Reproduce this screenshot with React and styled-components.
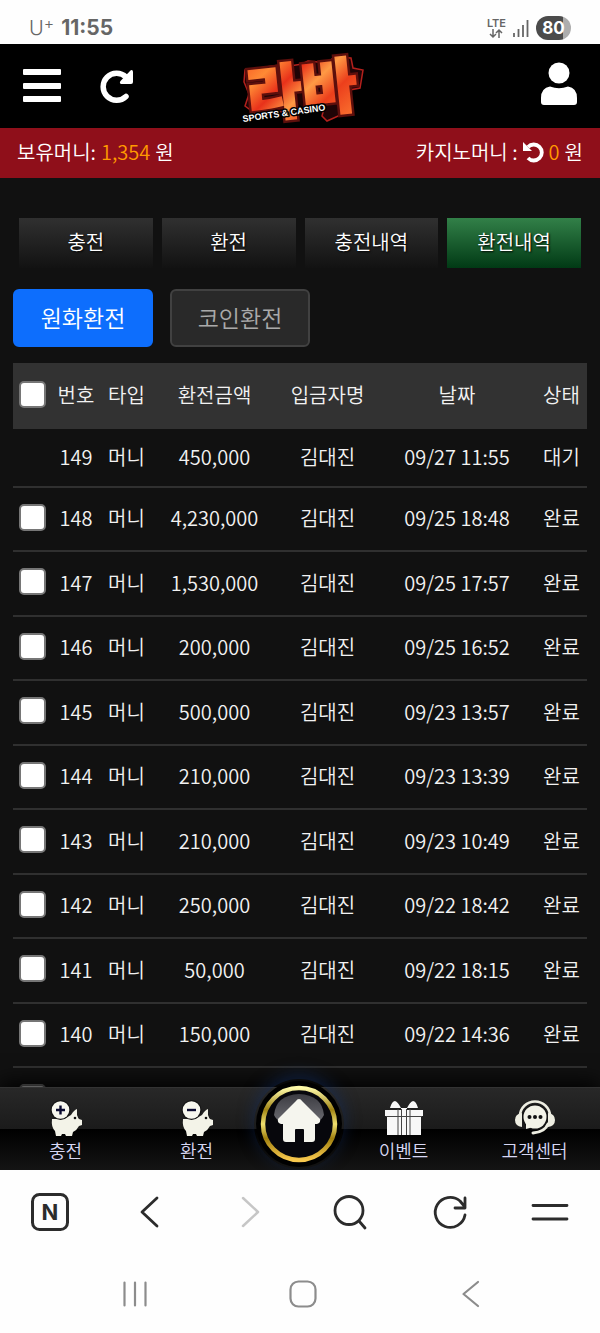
import { useState } from 'react';
import styled, { createGlobalStyle } from 'styled-components';

const rows = [
  { no: 149, amount: '450,000', date: '09/27 11:55', state: '대기' },
  { no: 148, amount: '4,230,000', date: '09/25 18:48', state: '완료' },
  { no: 147, amount: '1,530,000', date: '09/25 17:57', state: '완료' },
  { no: 146, amount: '200,000', date: '09/25 16:52', state: '완료' },
  { no: 145, amount: '500,000', date: '09/23 13:57', state: '완료' },
  { no: 144, amount: '210,000', date: '09/23 13:39', state: '완료' },
  { no: 143, amount: '210,000', date: '09/23 10:49', state: '완료' },
  { no: 142, amount: '250,000', date: '09/22 18:42', state: '완료' },
  { no: 141, amount: '50,000', date: '09/22 18:15', state: '완료' },
  { no: 140, amount: '150,000', date: '09/22 14:36', state: '완료' },
];

const GlobalStyle = createGlobalStyle`
  * { box-sizing: border-box; }
  body {
    margin: 0;
    background: #fefefe;
    font-family: 'Noto Sans CJK KR', sans-serif;
    font-size: 20px;
    font-weight: 350;
  }
  button {
    padding: 0;
    border: 0;
    background: none;
    font: inherit;
    color: inherit;
    cursor: pointer;
  }
  a { color: inherit; text-decoration: none; }
  svg { display: block; overflow: visible; }
`;

const Phone = styled.div`
  display: flex;
  flex-direction: column;
  height: 100vh;
`;

/* 상태바 */
const StatusBar = styled.div`
  display: flex;
  align-items: center;
  justify-content: space-between;
  flex: none;
  height: 44px;
  padding: 12px 29px 0;
  background: #fefefe;
  color: #666;
  font-family: Inter, sans-serif;
`;
const StatusGroup = styled.div`
  display: flex;
  align-items: center;
  gap: 7px;
`;
const Carrier = styled.span`
  font-size: 20px;
  line-height: 24px;
  font-weight: 300;
  sup {
    font-size: 16px;
    line-height: 0;
    vertical-align: 6px;
  }
`;
const Clock = styled.span`
  font-size: 21px;
  line-height: 24px;
  font-weight: 700;
`;
const Lte = styled.div`
  display: flex;
  flex-direction: column;
  align-items: center;
  font-size: 11px;
  line-height: 11px;
  font-weight: 600;
`;
const Battery = styled.div`
  width: 35px;
  height: 24px;
  border-radius: 12px;
  background: linear-gradient(90deg, #4b4b4b 78%, #adadad 78%);
  color: #fff;
  font-size: 17px;
  line-height: 24px;
  font-weight: 700;
  text-align: center;
`;

/* 헤더 */
const Header = styled.header`
  display: grid;
  grid-template-columns: 1fr auto 1fr;
  align-items: center;
  flex: none;
  height: 84px;
  padding: 0 22px;
  background: #000;
  color: #fff;
`;
const HeaderLeft = styled.div`
  display: flex;
  align-items: center;
  gap: 38px;
`;
const UserButton = styled.button`
  justify-self: end;
`;

const MoneyBar = styled.div`
  display: flex;
  align-items: center;
  justify-content: space-between;
  flex: none;
  height: 50px;
  padding: 0 17px 3px;
  background: #8f0f1a;
  color: #fff;
`;
const Money = styled.div`
  display: flex;
  align-items: center;
  gap: 5px;
`;
const Amount = styled.span`
  color: #ff9a00;
`;

/* 본문 */
const Main = styled.main`
  flex: 1;
  min-height: 0;
  overflow: hidden;
  padding-top: 40px;
  background: #111;
  color: #f2f2f2;
`;
const Tabs = styled.nav`
  display: grid;
  grid-template-columns: repeat(4, 1fr);
  gap: 9px;
  padding: 0 19px;
`;
const Tab = styled.button`
  height: 50px;
  padding-bottom: 3px;
  background: ${(props) =>
    props.$active
      ? 'linear-gradient(#328048, #013a15)'
      : 'linear-gradient(#303030, #121212)'};
  color: #fff;
  text-shadow: 1px 1px 2px #000;
`;
const SubTabs = styled.div`
  display: flex;
  gap: 17px;
  padding: 21px 13px 16px;
`;
const SubTab = styled.button`
  width: 140px;
  height: 58px;
  padding-bottom: 3px;
  border: 2px solid ${(props) => (props.$active ? '#0d6efd' : '#414141')};
  border-radius: 6px;
  background: ${(props) => (props.$active ? '#0d6efd' : '#292929')};
  color: ${(props) => (props.$active ? '#fff' : '#aaa')};
  font-size: 23px;
`;
const TableWrap = styled.div`
  padding: 0 13px;
`;
const Table = styled.table`
  width: 100%;
  table-layout: fixed;
  border-collapse: collapse;
  text-align: center;
  white-space: nowrap;

  th, td {
    padding: 0 0 3px;
    font-weight: 350;
  }
  th {
    height: 66px;
    background: #323232;
  }
  td {
    height: 64px;
    border-bottom: 2px solid #303030;
  }
  tr:nth-child(odd) td { height: 65px; }
  tbody tr:first-child td { height: 58px; }
`;
const Col = styled.col`
  width: ${(props) => props.$width}px;
`;
const Check = styled.input`
  appearance: none;
  display: block;
  width: 27px;
  height: 27px;
  margin: 0 auto 1px;
  border: 2px solid #767676;
  border-radius: 5px;
  background: #fff;
  &:checked {
    background: #0d6efd;
  }
`;

/* 하단 메뉴 */
const BottomNav = styled.nav`
  position: relative;
  display: flex;
  flex: none;
  height: 83px;
  border-top: 1px solid #333;
  background: linear-gradient(#282828, #1b1b1b 50%, #000 50%, #141414);
  box-shadow: 0 -4px 20px #000;
  color: #d8d8f4;
`;
const NavItem = styled.a`
  display: flex;
  flex-direction: column;
  align-items: center;
  flex: 1;
  padding-top: 12px;
  font-size: 18px;
  line-height: 26px;
`;
const HomeSlot = styled.div`
  position: relative;
  width: 76px;
`;
const HomeLink = styled.a`
  position: absolute;
  left: 50%;
  bottom: 1px;
  margin-left: -46px;
  border-radius: 50%;
  box-shadow: 0 -4px 16px #12306c80;
`;

const BrowserBar = styled.nav`
  position: relative;
  display: flex;
  flex: none;
  height: 83px;
  background: #fefefe;
  color: #2c2c2c;
`;
const SystemBar = styled.nav`
  display: flex;
  flex: none;
  height: 80px;
  padding: 2px 45px 0 51px;
  background: #fefefe;
  color: #8c8c8c;
`;
const BarButton = styled.button`
  display: flex;
  align-items: center;
  justify-content: center;
  flex: 1;
  &:disabled { color: #c6c6c6; }
`;

const Logo = () => (
  <svg width="128" height="80" viewBox="0 0 128 80" fontFamily="'Noto Sans CJK KR', sans-serif">
    <defs>
      <linearGradient id="lava" x1="0" y1="0" x2="1" y2="1">
        <stop offset="0" stopColor="#f4431c" />
        <stop offset=".25" stopColor="#ff8a35" />
        <stop offset=".4" stopColor="#e8311a" />
        <stop offset=".55" stopColor="#ff9a45" />
        <stop offset=".7" stopColor="#ec3f1c" />
        <stop offset="1" stopColor="#ff8436" />
      </linearGradient>
    </defs>
    <path d="M9 24 50 18 54 20 66 18 72 15 92 17 98 11 115 12 117 22 127 24 124 42 114 44 109 67 91 75 86 70 88 62 20 68 9 60 13 48 8 36Z" fill="#1f0406" stroke="#b3201c" strokeWidth="1.500" />
    <g fontSize="60" fontWeight="900" transform="rotate(-6 64 40)">
      <text x="10" y="66" fill="#5e0f0c" stroke="#5e0f0c" strokeWidth="7">라바</text>
      <text x="10" y="66" fill="url(#lava)" stroke="url(#lava)" strokeWidth="2">라바</text>
    </g>
    <text x="7" y="76" transform="rotate(-8 7 76)" fontFamily="'Liberation Sans', sans-serif" fontSize="9" fontWeight="700" fill="#fff" stroke="#000" strokeWidth="3" paintOrder="stroke">SPORTS &amp; CASINO</text>
  </svg>
);

const Pig = ({ minus }) => (
  <svg width="32" height="37" viewBox="0 0 32 37">
    <path d="M2 19H14L21 15Q24 10 27 9L27 15Q28 18 29 19L32 20V25L29 26Q27 30 23 32L22 36H16L15 34H12L11 36H6L5 31Q1 27 2 19Z" fill="#f3f3e8" />
    <circle cx="25" cy="18" r="1.300" fill="#111" />
    <circle cx="10.500" cy="10" r="10" fill="#151515" />
    <circle cx="10.500" cy="10" r="8.800" fill="#f7f7ee" />
    <path d={minus ? 'M6 10h9' : 'M6 10h9M10.500 5.500v9'} stroke="#0b0b30" strokeWidth="2.400" />
  </svg>
);

const Gift = () => (
  <svg width="40" height="37" viewBox="0 0 40 37" fill="#f8f8f8">
    <path d="M3 17h34v18H3z" />
    <path d="M1 10h38v6H1zM6 8Q8 1 11 1 14 2 17 8ZM34 8Q32 1 29 1 26 2 23 8ZM17 8h6v4h-6z" />
    <path d="M2 16.500h36M14 9v26M17.500 9v26M22.500 9v26M26 9v26" stroke="#444" fill="none" />
  </svg>
);

const Headset = () => (
  <svg width="42" height="37" viewBox="0 0 42 37">
    <path d="M6 16A15 14.500 0 0 1 36 16" fill="none" stroke="#eeeee2" strokeWidth="2.500" />
    <path d="M8 13Q1 14 1 20T8 27ZM34 13Q41 14 41 20T34 27Z" fill="#eeeee2" />
    <path d="M34 24Q31 32 19 33" fill="none" stroke="#eeeee2" strokeWidth="3" strokeLinecap="round" />
    <circle cx="21" cy="17" r="13" fill="#151515" />
    <circle cx="21" cy="17" r="11.500" fill="#f3f3e8" />
    <path d="M12 22 12 29 19 27Z" fill="#f3f3e8" />
    <g fill="#111"><circle cx="15.500" cy="17" r="2" /><circle cx="21" cy="17" r="2" /><circle cx="26.500" cy="17" r="2" /></g>
  </svg>
);

const HomeIcon = () => (
  <svg width="90" height="90" viewBox="0 0 90 90">
    <defs>
      <linearGradient id="gold" x1="0" y1="0" x2="0" y2="1">
        <stop offset="0" stopColor="#fffaa8" />
        <stop offset=".3" stopColor="#a08414" />
        <stop offset=".5" stopColor="#f0e070" />
        <stop offset=".7" stopColor="#a0800f" />
        <stop offset="1" stopColor="#f8c84e" />
      </linearGradient>
      <linearGradient id="gloss" x1="0" y1="0" x2="0" y2="1">
        <stop offset="0" stopColor="#3c3c42" />
        <stop offset="1" stopColor="#6a6a70" />
      </linearGradient>
    </defs>
    <circle cx="45" cy="45" r="43" fill="#000" />
    <circle cx="45" cy="45" r="36" fill="#07070c" stroke="url(#gold)" strokeWidth="4.500" />
    <path d="M20 36Q22 16 45 15 68 16 70 36 67 42 62 43H28Q22 41 20 36Z" fill="url(#gloss)" />
    <path d="M45 20Q47 20 48 22L66 40Q67 44 63 45H61V60Q61 63 58 63H50V51Q50 50 49 50H42Q41 50 41 51V63H32Q29 63 29 60V45H27Q23 44 24 40L42 22Q43 20 45 20Z" fill="#f5f5ee" />
  </svg>
);

const App = () => {
  const [type, setType] = useState('won');

  return (
    <>
      <GlobalStyle />
      <Phone>
        <StatusBar>
          <StatusGroup>
            <Carrier>U<sup>+</sup></Carrier>
            <Clock>11:55</Clock>
          </StatusGroup>
          <StatusGroup>
            <Lte>
              LTE
              <svg width="14" height="9" viewBox="0 0 14 9" fill="none" stroke="#666" strokeWidth="1.500">
                <path d="M4 0v8M1 5l3 3 3-3M10 9V1M7 4l3-3 3 3" />
              </svg>
            </Lte>
            <svg width="16" height="17" viewBox="0 0 16 17" stroke="#666" strokeWidth="1.800">
              <path d="M1 13v4M5.500 9v8M10 5v12M14.500 0v17" />
            </svg>
            <Battery>80</Battery>
          </StatusGroup>
        </StatusBar>

        <Header>
          <HeaderLeft>
            <button aria-label="메뉴">
              <svg width="40" height="36" viewBox="0 0 40 36" fill="#fff">
                <rect x="1" y="1" width="38" height="6" rx="1" />
                <rect x="1" y="15" width="38" height="6" rx="1" />
                <rect x="1" y="28" width="38" height="6" rx="1" />
              </svg>
            </button>
            <button aria-label="새로고침">
              <svg width="34" height="36" viewBox="0 0 34 36">
                <path d="M26 28.500A13.500 13.500 0 1 1 26 9" fill="none" stroke="#fff" strokeWidth="5.500" strokeLinecap="round" />
                <path d="M33 3.500V14Q33 16 31 16H21Q19 15 20.500 13L30 3Q32 1 33 3.500Z" fill="#fff" />
              </svg>
            </button>
          </HeaderLeft>
          <a href="#home" aria-label="라바"><Logo /></a>
          <UserButton aria-label="내 정보">
            <svg width="38" height="48" viewBox="0 0 38 48" fill="#fff">
              <circle cx="19" cy="11" r="10.500" />
              <path d="M10 24.500Q19 28 28 24.500 37 26 37 36V40Q37 43 34 43H4Q1 43 1 40V36Q1 26 10 24.500Z" />
            </svg>
          </UserButton>
        </Header>

        <MoneyBar>
          <Money>
            보유머니: <Amount>1,354</Amount> 원
          </Money>
          <Money>
            카지노머니 :
            <button aria-label="카지노머니 새로고침">
              <svg width="21" height="22" viewBox="0 0 21 22">
                <path d="M5 17A8 8 0 1 0 5 6" fill="none" stroke="#fff" strokeWidth="3.800" />
                <path d="M0 1V10H9Z" fill="#fff" />
              </svg>
            </button>
            <Amount>0</Amount> 원
          </Money>
        </MoneyBar>

        <Main>
          <Tabs>
            <Tab>충전</Tab>
            <Tab>환전</Tab>
            <Tab>충전내역</Tab>
            <Tab $active>환전내역</Tab>
          </Tabs>
          <SubTabs>
            <SubTab $active={type === 'won'} onClick={() => setType('won')}>원화환전</SubTab>
            <SubTab $active={type === 'coin'} onClick={() => setType('coin')}>코인환전</SubTab>
          </SubTabs>
          <TableWrap>
            <Table>
              <colgroup>
                <Col $width={38} />
                <Col $width={50} />
                <Col $width={51} />
                <Col $width={125} />
                <Col $width={101} />
                <Col $width={158} />
                <Col $width={51} />
              </colgroup>
              <thead>
                <tr>
                  <th><Check type="checkbox" aria-label="전체 선택" /></th>
                  <th>번호</th>
                  <th>타입</th>
                  <th>환전금액</th>
                  <th>입금자명</th>
                  <th>날짜</th>
                  <th>상태</th>
                </tr>
              </thead>
              <tbody>
                {rows.map((row) => (
                  <tr key={row.no}>
                    {/* 대기 상태는 선택할 수 없음 */}
                    <td>{row.state === '완료' && <Check type="checkbox" aria-label={`${row.no}번 선택`} />}</td>
                    <td>{row.no}</td>
                    <td>머니</td>
                    <td>{row.amount}</td>
                    <td>김대진</td>
                    <td>{row.date}</td>
                    <td>{row.state}</td>
                  </tr>
                ))}
                <tr>
                  <td><Check type="checkbox" aria-label="139번 선택" /></td>
                  <td colSpan={6} />
                </tr>
              </tbody>
            </Table>
          </TableWrap>
        </Main>

        <BottomNav>
          <NavItem href="#charge"><Pig />충전</NavItem>
          <NavItem href="#exchange"><Pig minus />환전</NavItem>
          <HomeSlot>
            <HomeLink href="#home" aria-label="홈"><HomeIcon /></HomeLink>
          </HomeSlot>
          <NavItem href="#event"><Gift />이벤트</NavItem>
          <NavItem href="#support"><Headset />고객센터</NavItem>
        </BottomNav>

        <BrowserBar>
          <BarButton aria-label="네이버">
            <svg width="40" height="40" viewBox="0 0 40 40">
              <rect x="2.500" y="2.500" width="35" height="35" rx="7" fill="none" stroke="currentColor" strokeWidth="3" />
              <text x="20" y="28" textAnchor="middle" fontFamily="Inter, sans-serif" fontSize="22" fontWeight="700" fill="currentColor">N</text>
            </svg>
          </BarButton>
          <BarButton aria-label="뒤로">
            <svg width="20" height="32" viewBox="0 0 20 32" fill="none" stroke="currentColor" strokeWidth="2.800" strokeLinecap="round" strokeLinejoin="round">
              <path d="M17 2 2 16 17 30" />
            </svg>
          </BarButton>
          <BarButton aria-label="앞으로" disabled>
            <svg width="20" height="32" viewBox="0 0 20 32" fill="none" stroke="currentColor" strokeWidth="2.500" strokeLinecap="round" strokeLinejoin="round">
              <path d="M3 2 18 16 3 30" />
            </svg>
          </BarButton>
          <BarButton aria-label="검색">
            <svg width="34" height="36" viewBox="0 0 34 36" fill="none" stroke="currentColor" strokeWidth="2.800" strokeLinecap="round">
              <circle cx="16" cy="16.500" r="14" />
              <path d="M26 27l6 7" />
            </svg>
          </BarButton>
          <BarButton aria-label="새로고침">
            <svg width="34" height="34" viewBox="0 0 34 34" fill="none" stroke="currentColor" strokeWidth="2.800" strokeLinecap="round" strokeLinejoin="round">
              <path d="M32 20A15 15 0 1 1 27 6L32 12M32 3V13H22" />
            </svg>
          </BarButton>
          <BarButton aria-label="더보기">
            <svg width="38" height="18" viewBox="0 0 38 18" stroke="currentColor" strokeWidth="2.800" strokeLinecap="round">
              <path d="M2 2.500h34M2 16h34" />
            </svg>
          </BarButton>
        </BrowserBar>

        <SystemBar>
          <BarButton aria-label="최근 앱">
            <svg width="26" height="26" viewBox="0 0 26 26" stroke="currentColor" strokeWidth="2.200" strokeLinecap="round">
              <path d="M2.500 1.500v23M13 1.500v23M23.500 1.500v23" />
            </svg>
          </BarButton>
          <BarButton aria-label="홈 화면">
            <svg width="28" height="28" viewBox="0 0 28 28" fill="none" stroke="currentColor" strokeWidth="2.200">
              <rect x="1.500" y="1.500" width="25" height="25" rx="8" />
            </svg>
          </BarButton>
          <BarButton aria-label="이전">
            <svg width="18" height="28" viewBox="0 0 18 28" fill="none" stroke="currentColor" strokeWidth="2.200" strokeLinecap="round" strokeLinejoin="round">
              <path d="M16 2 1.500 14 16 26" />
            </svg>
          </BarButton>
        </SystemBar>
      </Phone>
    </>
  );
};
export default App;
